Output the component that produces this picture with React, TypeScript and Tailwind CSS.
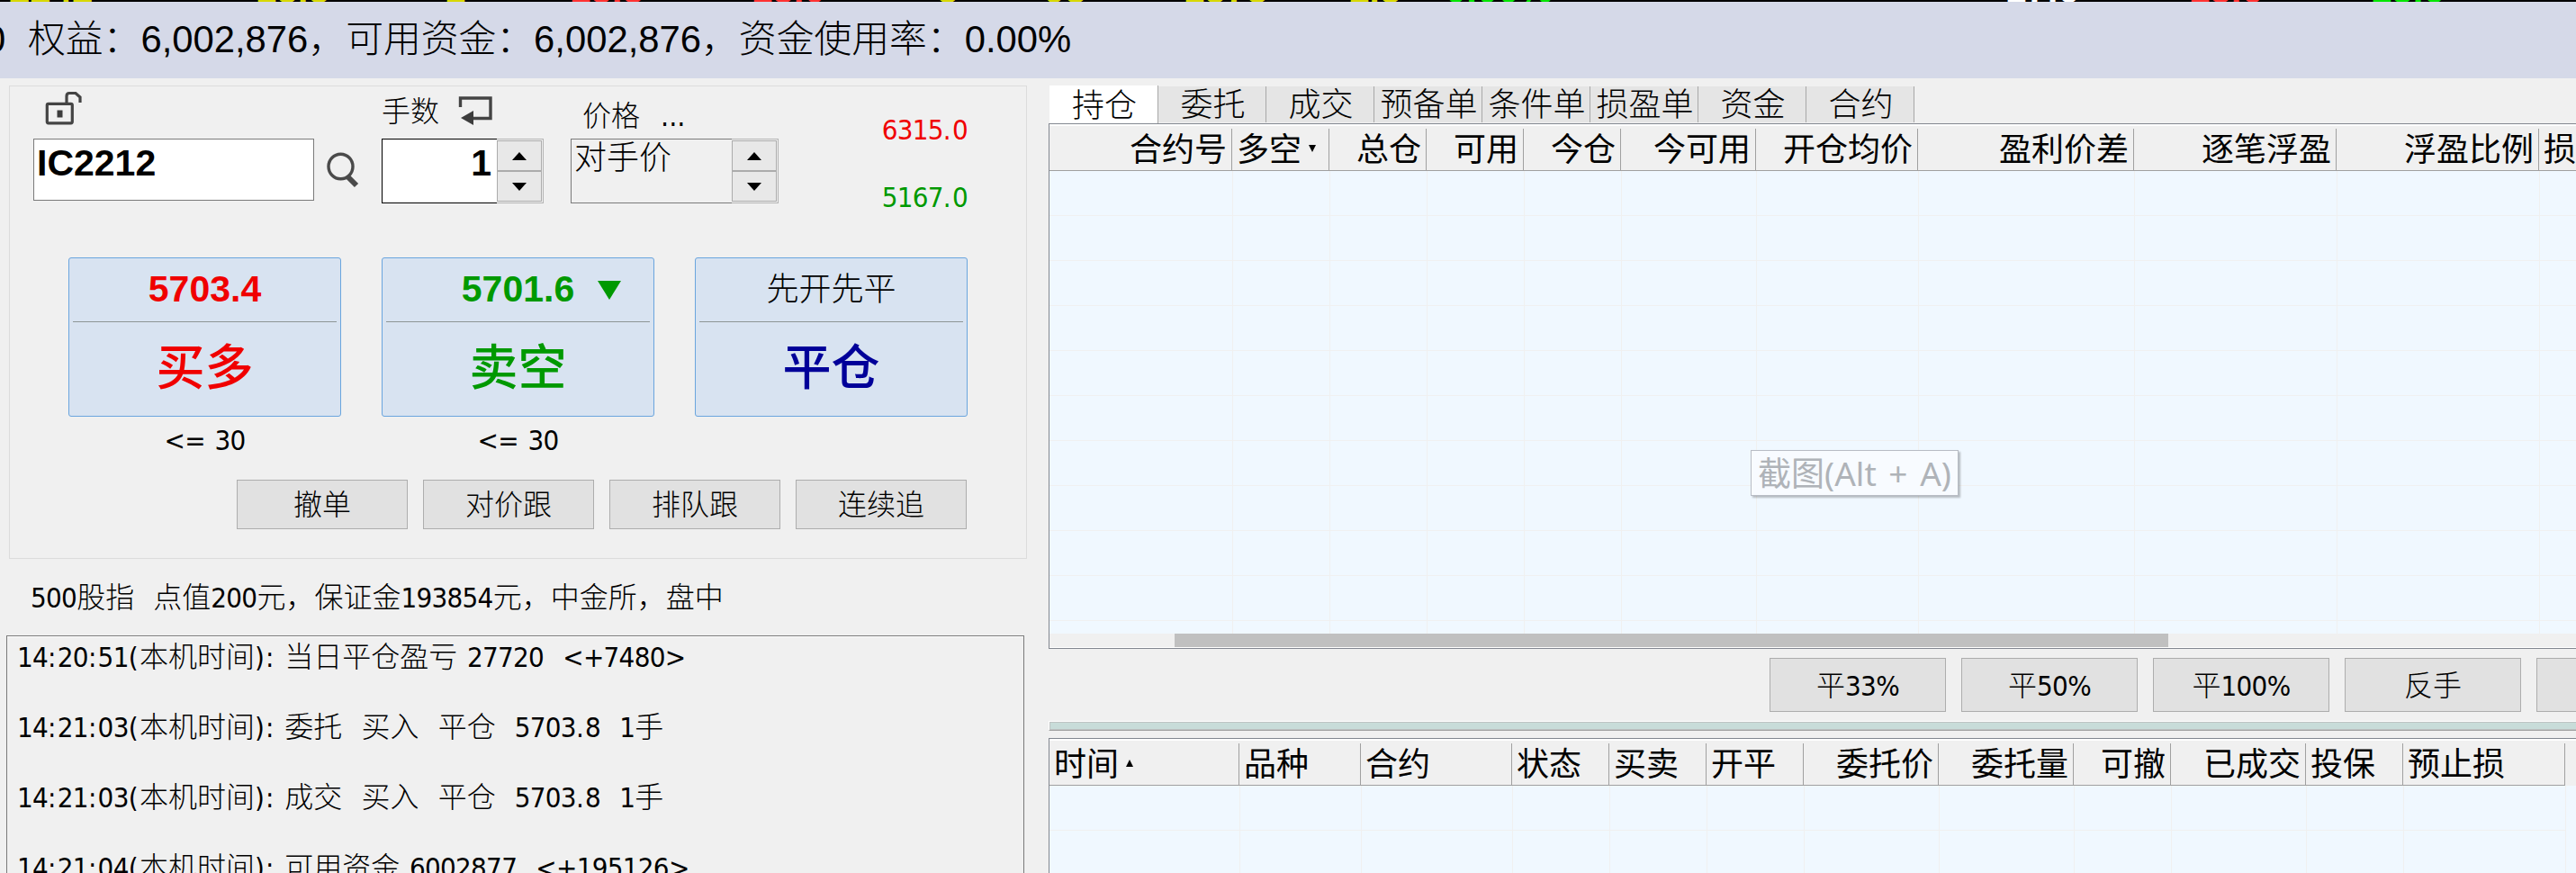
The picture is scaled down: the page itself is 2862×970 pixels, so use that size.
import React from "react";

type Align = "left" | "right";

interface Column {
    label: string;
    width: number;
    align: Align;
    sort?: "up" | "down";
}

const ticks = [
    { text: "2242", left: 10, color: "text-[#d8d800]" },
    { text: "18.8", left: 284, color: "text-[#d8d800]" },
    { text: "1", left: 494, color: "text-[#d8d800]" },
    { text: "18.8", left: 633, color: "text-[#ff3232]" },
    { text: "18.0", left: 835, color: "text-[#ff3232]" },
    { text: "8", left: 1041, color: "text-[#d8d800]" },
    { text: "98", left: 1160, color: "text-[#d8d800]" },
    { text: "1878", left: 1315, color: "text-[#d8d800]" },
    { text: "1.8", left: 1498, color: "text-[#d8d800]" },
    { text: "0.00%", left: 1606, color: "text-[#00e600]" },
    { text: "17.6", left: 2228, color: "text-white" },
    { text: "18.6", left: 2432, color: "text-[#ff3232]" },
    { text: "18.6", left: 2634, color: "text-[#00e600]" },
];

const tabs = ["持仓", "委托", "成交", "预备单", "条件单", "损盈单", "资金", "合约"];

const positionColumns: Column[] = [
    { label: "合约号", width: 203, align: "right" },
    { label: "多空", width: 108, align: "left", sort: "down" },
    { label: "总仓", width: 108, align: "right" },
    { label: "可用", width: 108, align: "right" },
    { label: "今仓", width: 108, align: "right" },
    { label: "今可用", width: 150, align: "right" },
    { label: "开仓均价", width: 180, align: "right" },
    { label: "盈利价差", width: 240, align: "right" },
    { label: "逐笔浮盈", width: 225, align: "right" },
    { label: "浮盈比例", width: 225, align: "right" },
    { label: "损", width: 108, align: "left" },
];

const orderColumns: Column[] = [
    { label: "时间", width: 211, align: "left", sort: "up" },
    { label: "品种", width: 135, align: "left" },
    { label: "合约", width: 168, align: "left" },
    { label: "状态", width: 108, align: "left" },
    { label: "买卖", width: 108, align: "left" },
    { label: "开平", width: 108, align: "left" },
    { label: "委托价", width: 150, align: "right" },
    { label: "委托量", width: 150, align: "right" },
    { label: "可撤", width: 108, align: "right" },
    { label: "已成交", width: 150, align: "right" },
    { label: "投保", width: 108, align: "left" },
    { label: "预止损", width: 180, align: "left" },
];

const logs = [
    "14:20:51(本机时间): 当日平仓盈亏 27720  <+7480>",
    "14:21:03(本机时间): 委托  买入  平仓  5703.8  1手",
    "14:21:03(本机时间): 成交  买入  平仓  5703.8  1手",
    "14:21:04(本机时间): 可用资金 6002877  <+195126>",
];

const runClass = (part: string) => {
    if (/^[\u3000-\uffef]/.test(part)) return "";
    if (/^[():.]/.test(part)) return "text-[31px] tracking-[1.3px] font-normal";
    return "text-[31px] tracking-[-0.7px] [word-spacing:2.4px] font-normal";
};

// digits are set a bit tighter than the chinese text, punctuation a bit wider
const Mixed: React.FC<{ text: string }> = ({ text }) => (
    <>
        {text.split(/([\u3000-\uffef]+|[():.]+)/).filter(Boolean).map((part, i) => (
            <span key={i} className={runClass(part)}>{part}</span>
        ))}
    </>
);

const Caret: React.FC<{ dir: "up" | "down"; className: string }> = ({ dir, className }) => (
    <svg className={className} viewBox="0 0 16 9" preserveAspectRatio="none" fill="currentColor">
        {dir === "up" ? <path d="M0 9 L8 0 L16 9Z" /> : <path d="M0 0 H16 L8 9Z" />}
    </svg>
);

const SpinButtons: React.FC = () => (
    <div className="w-[52px] h-[72px] border-y border-r border-[#b4b4b4] p-px pl-0 flex flex-col">
        <div className="flex-1 border border-[#acacac] bg-[#e8e8e8] flex items-center justify-center">
            <Caret dir="up" className="w-4 h-[9px]" />
        </div>
        <div className="flex-1 border border-[#acacac] bg-[#e8e8e8] flex items-center justify-center">
            <Caret dir="down" className="w-4 h-[9px]" />
        </div>
    </div>
);

const SymbolField: React.FC = () => (
    <div className="w-[387px]">
        <div className="h-[58px] pl-[13px] pt-[5px]">
            <svg className="w-[42px] h-[38px]" viewBox="0 0 42 38" fill="none" stroke="#444" strokeWidth="3.2">
                <rect x="2.3" y="14.3" width="28" height="21.5" rx="1.5" />
                <path d="M24 14 V6 Q24 2.5 27 2.5 H34 L39 7 V13" />
                <rect x="13.5" y="21.5" width="6" height="8" fill="#3c3c3c" stroke="none" />
            </svg>
        </div>
        <div className="flex">
            <div className="w-[312px] h-[69px] bg-white border border-[#7a7a7a] pl-[3px] font-['Liberation_Sans'] font-bold text-[41px] leading-[52px]">
                IC2212
            </div>
            <svg className="ml-[13px] mt-[15px] w-[38px] h-[40px]" viewBox="0 0 38 40" fill="none" stroke="#4a4a4a">
                <ellipse cx="16.5" cy="16" rx="13.5" ry="13.8" strokeWidth="3.4" />
                <path d="M24 27 L34 37" strokeWidth="6" />
            </svg>
        </div>
    </div>
);

const LotsField: React.FC = () => (
    <div className="w-[210px]">
        <div className="h-[58px] flex">
            <span className="mt-[8px] text-[32px] leading-[40px] w-[85px]">手数</span>
            <svg className="mt-[10px] w-[38px] h-[33px]" viewBox="0 0 38 33" fill="none" stroke="#444" strokeWidth="3.4">
                <path d="M2.5 13 V3 H36 V25.5 H14" />
                <path d="M3 25 L17 17 V33Z" fill="#3c3c3c" stroke="none" />
            </svg>
        </div>
        <div className="flex">
            <div className="w-[128px] h-[72px] bg-white border border-r-0 border-black pr-[6px] text-right font-['Liberation_Sans'] font-bold text-[41px] leading-[52px]">
                1
            </div>
            <SpinButtons />
        </div>
    </div>
);

const PriceField: React.FC = () => (
    <div className="w-[231px]">
        <div className="h-[58px] pt-[13px] pl-[13px] text-[32px] leading-[40px] whitespace-pre flex">
            <span className="w-[87px]">价格</span>
            <span className="font-normal">...</span>
        </div>
        <div className="flex">
            <div className="w-[179px] h-[72px] border border-r-0 border-[#7a7a7a] pl-[3px] text-[36px] leading-[42px]">
                对手价
            </div>
            <SpinButtons />
        </div>
    </div>
);

interface OrderButtonProps {
    top: React.ReactNode;
    label: string;
    color: string;
}

const OrderButton: React.FC<OrderButtonProps> = ({ top, label, color }) => (
    <div className={`w-[303px] h-[177px] px-1 rounded-[3px] border border-[#6aa5de] bg-[#d8e3f1] text-center ${color}`}>
        <div className="h-[71px] border-b border-[#8e9696] flex items-center justify-center">{top}</div>
        <div className="pt-[13px] text-[54px] leading-[78px] font-medium">{label}</div>
    </div>
);

const PlainButton: React.FC<{ text: string; className: string }> = ({ text, className }) => (
    <div className={`shrink-0 border border-[#adadad] bg-[#e1e1e1] text-center text-[32px] ${className}`}>
        <Mixed text={text} />
    </div>
);

const Grid: React.FC<{ columns: Column[]; rows: number }> = ({ columns, rows }) => (
    <div className="flex h-full">
        {columns.map((c) => (
            <div key={c.label} className="shrink-0 flex flex-col" style={{ width: c.width }}>
                <div className="h-[52px] shrink-0 pt-[3px] pb-px bg-[#f0f0f0] border-t-2 border-white border-b border-b-[#a0a0a0]">
                    <div
                        className={`h-[47px] border-r border-[#a0a0a0] shadow-[1px_0_0_#fff] flex items-center whitespace-nowrap text-[36px] leading-[46px] font-normal ${
                            c.align === "right" ? "justify-end pr-[5px]" : "pl-[5px]"
                        }`}
                    >
                        {c.label}
                        {c.sort && <Caret dir={c.sort} className="ml-2 -mt-1 w-[8px] h-[8px]" />}
                    </div>
                </div>
                {Array.from({ length: rows }, (_, i) => (
                    <div key={i} className="h-[50px] shrink-0 border-b border-[#f0f0f0] shadow-[1px_0_0_#f0f0f0]" />
                ))}
            </div>
        ))}
    </div>
);

const TradePanel: React.FC = () => (
    <div className="ml-[10px] mt-[8px] w-[1131px] h-[526px] border border-[#dcdcdc]">
        <div className="flex h-[130px] pl-[26px]">
            <SymbolField />
            <LotsField />
            <PriceField />
            <div className="w-[210px] pt-[28px] text-right">
                <div className="h-[75px] leading-[40px] text-[#f00000]"><Mixed text="6315.0" /></div>
                <div className="leading-[40px] text-[#009900]"><Mixed text="5167.0" /></div>
            </div>
        </div>
        <div className="flex gap-[45px] pl-[65px] mt-[60px]">
            <OrderButton
                color="text-[#f00000]"
                label="买多"
                top={<span className="font-['Liberation_Sans'] font-bold text-[41px]">5703.4</span>}
            />
            <OrderButton
                color="text-[#009900]"
                label="卖空"
                top={
                    <>
                        <span className="ml-[52px] font-['Liberation_Sans'] font-bold text-[41px]">5701.6</span>
                        <Caret dir="down" className="ml-[26px] w-[26px] h-[21px]" />
                    </>
                }
            />
            <OrderButton
                color="text-[#000099]"
                label="平仓"
                top={<span className="text-black text-[36px]">先开先平</span>}
            />
        </div>
        <div className="flex gap-[45px] pl-[65px] h-[70px] pt-[6px] leading-[40px] text-center">
            <div className="w-[303px]"><Mixed text="<= 30" /></div>
            <div className="w-[303px]"><Mixed text="<= 30" /></div>
        </div>
        <div className="flex gap-[17px] pl-[252px]">
            {["撤单", "对价跟", "排队跟", "连续追"].map((t) => (
                <PlainButton key={t} text={t} className="w-[190px] h-[55px] leading-[54px]" />
            ))}
        </div>
    </div>
);

export default function App() {
    return (
        <div className="w-[2862px] h-[970px] overflow-hidden bg-[#f0f0f0] flex flex-col text-black text-[32px] font-light font-['DejaVu_Sans_Condensed','Noto_Sans_CJK_SC',sans-serif]">
            <div className="relative h-[2px] shrink-0 bg-black overflow-hidden">
                {ticks.map((t) => (
                    <span
                        key={t.left}
                        className={`absolute bottom-[-8px] font-['Liberation_Sans'] font-bold text-[42px] leading-[42px] ${t.color}`}
                        style={{ left: t.left }}
                    >
                        {t.text}
                    </span>
                ))}
            </div>
            <div className="h-[85px] shrink-0 bg-[#d5d9e8] flex whitespace-pre text-[41.8px] leading-[83px] font-['Liberation_Sans','Noto_Sans_CJK_SC',sans-serif]">
                <span className="w-[31px] -ml-[17px] mr-[17px]">0</span>
                <span>权益：6,002,876，可用资金：6,002,876，资金使用率：0.00%</span>
            </div>
            <div className="flex flex-1 min-h-0">
                <div className="w-[1165px] shrink-0 flex flex-col">
                    <TradePanel />
                    <div className="h-[85px] shrink-0 pl-[34px] pt-[23px] leading-[40px] whitespace-pre">
                        <Mixed text="500股指  点值200元，保证金193854元，中金所，盘中" />
                    </div>
                    <div className="ml-[7px] w-[1131px] flex-1 min-h-0 overflow-hidden border border-b-0 border-[#7a7a7a]">
                        <div className="border-t border-white pl-[11px] pt-[2px]">
                            {logs.map((line) => (
                                <div key={line} className="h-[78px] leading-[40px] whitespace-pre">
                                    <Mixed text={line} />
                                </div>
                            ))}
                        </div>
                    </div>
                </div>
                <div className="w-[1697px] shrink-0 flex flex-col">
                    <div className="h-[50px] shrink-0 pl-px flex items-end pb-px text-[36px] text-center">
                        {tabs.map((t, i) =>
                            i === 0 ? (
                                <div key={t} className="w-[121px] h-[42px] pl-[2px] -mb-px bg-white border-r border-[#a8a8a8] leading-[45px]">{t}</div>
                            ) : (
                                <div key={t} className="w-[120px] h-[40px] pl-[2px] bg-[#e5e5e5] border-r border-[#a8a8a8] leading-[41px]">{t}</div>
                            )
                        )}
                    </div>
                    <div className="relative h-[584px] shrink-0 border border-r-0 border-[#828790] bg-[#f0f8ff] flex flex-col">
                        <div className="flex-1 min-h-0 overflow-hidden">
                            <Grid columns={positionColumns} rows={11} />
                        </div>
                        <div className="h-[15px] shrink-0 bg-[#f0f0f0] pl-[139px]">
                            <div className="w-[1104px] h-full bg-[#c0c0c0]" />
                        </div>
                        <div className="h-px bg-white" />
                        <div className="absolute left-[779px] top-[362px] w-[231px] h-[51px] border border-[#b8bcc4] bg-[#f8fbff] shadow-[2px_2px_2px_rgba(0,0,0,0.25)] text-[#afb3b8] text-[37px] [word-spacing:4px] leading-[49px] text-center whitespace-nowrap font-normal font-['Noto_Sans','Noto_Sans_CJK_SC',sans-serif]">
                            截图(Alt + A)
                        </div>
                    </div>
                    <div className="h-[80px] shrink-0 flex gap-[17px] pl-[801px] pt-[10px] overflow-hidden">
                        {["平33%", "平50%", "平100%", "反手", ""].map((t) => (
                            <PlainButton key={t} text={t} className="w-[196px] h-[60px] leading-[60px]" />
                        ))}
                    </div>
                    <div className="h-[11px] shrink-0 border-t border-l border-white border-b border-b-[#a0a0a0]">
                        <div className="h-full border-y border-l border-[#bfc3c3] bg-[#c8dcd9]" />
                    </div>
                    <div className="mt-[8px] flex-1 min-h-0 overflow-hidden border border-r-0 border-b-0 border-[#828790] bg-[#f0f8ff] flex">
                        <Grid columns={orderColumns} rows={2} />
                        <div className="h-[52px] flex-1 border-t-2 border-white bg-[#f0f0f0]" />
                    </div>
                </div>
            </div>
        </div>
    );
}
